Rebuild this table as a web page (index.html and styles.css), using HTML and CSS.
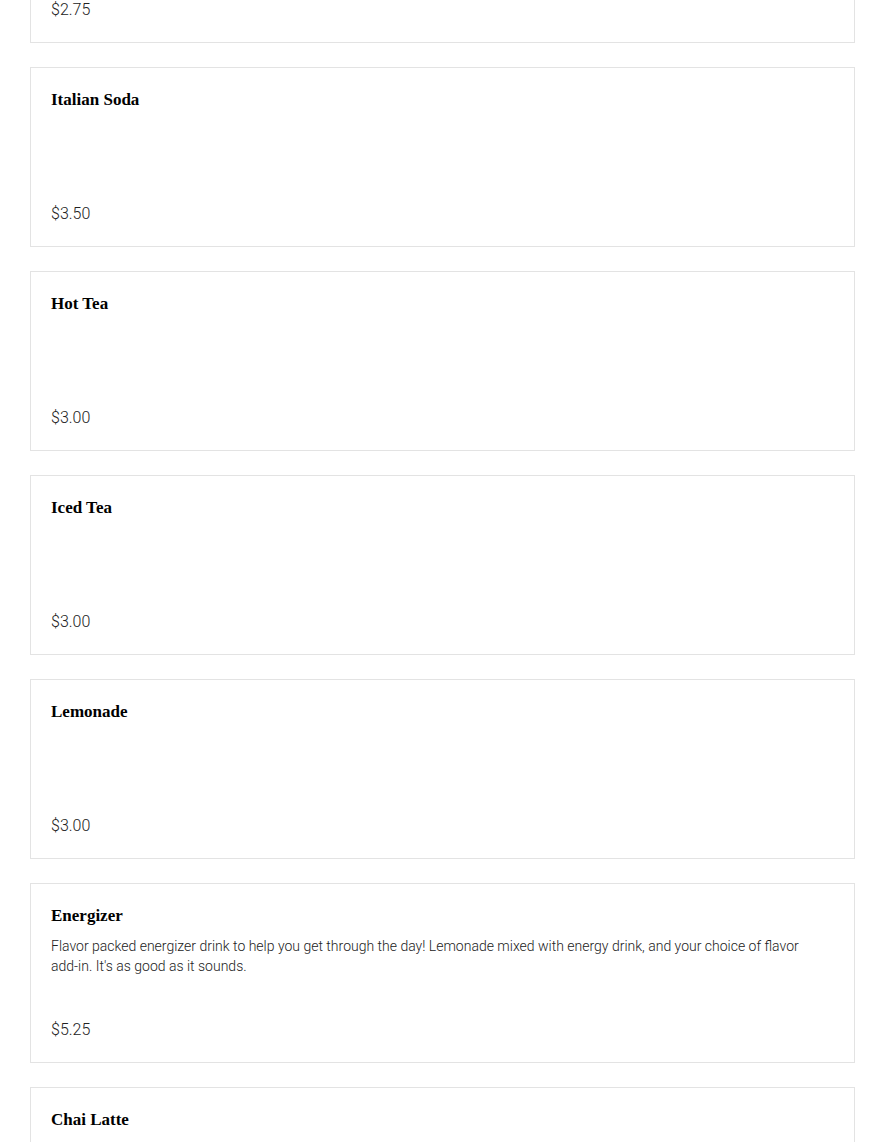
FILE: index.html
```html
<!DOCTYPE html>
<html lang="en">
<head>
  <meta charset="UTF-8" />
  <meta name="viewport" content="width=device-width, initial-scale=1.0"/>
  <title>Drinks Menu</title>
  <link rel="stylesheet" href="styles.css">
</head>
<body>

  <div class="menu">
    <div class="item">
      <h3>Hot Chocolate</h3>
      <p class="price">$2.75</p>
    </div>
    <div class="item">
      <h3>Italian Soda</h3>
      <p class="price">$3.50</p>
    </div>
    <div class="item">
      <h3>Hot Tea</h3>
      <p class="price">$3.00</p>
    </div>
    <div class="item">
      <h3>Iced Tea</h3>
      <p class="price">$3.00</p>
    </div>
    <div class="item">
      <h3>Lemonade</h3>
      <p class="price">$3.00</p>
    </div>
    <div class="item">
      <h3>Energizer</h3>
      <p class="desc">Flavor packed energizer drink to help you get through the day! Lemonade mixed with energy drink, and your choice of flavor <span class="nowrap">add-in.</span> It's as good as it sounds.</p>
      <p class="price">$5.25</p>
    </div>
    <div class="item">
      <h3>Chai Latte</h3>
      <p class="desc">Spiced black tea concentrate blended with steamed milk, finished with a dusting of cinnamon.</p>
      <p class="price">$4.25</p>
    </div>
  </div>

</body>
</html>
```

FILE: styles.css
```css
* {
  box-sizing: border-box;
}

body {
  margin: 0;
  background: #fff;
  font-family: Roboto, "Liberation Sans", sans-serif;
  color: #222;
}

/* page is shown scrolled part-way down the list */
.menu {
  margin-top: -137px;
  padding: 0 30px 40px 30px;
  display: flex;
  flex-direction: column;
  gap: 24px;
}

.item {
  height: 180px;
  border: 1px solid #e3e3e3;
  padding: 20px;
  display: flex;
  flex-direction: column;
}

h3 {
  margin: 0;
  font-family: "Liberation Serif", "DejaVu Serif", serif;
  font-weight: 700;
  font-size: 17px;
  line-height: 24px;
  color: #000;
}

.desc {
  margin: 8px 0 0 0;
  font-size: 14px;
  font-weight: 300;
  line-height: 20px;
  color: #222;
}

.nowrap {
  white-space: nowrap;
}

.price {
  margin: auto 0 0 0;
  font-size: 16px;
  font-weight: 300;
  line-height: 24px;
  color: #222;
}
```
